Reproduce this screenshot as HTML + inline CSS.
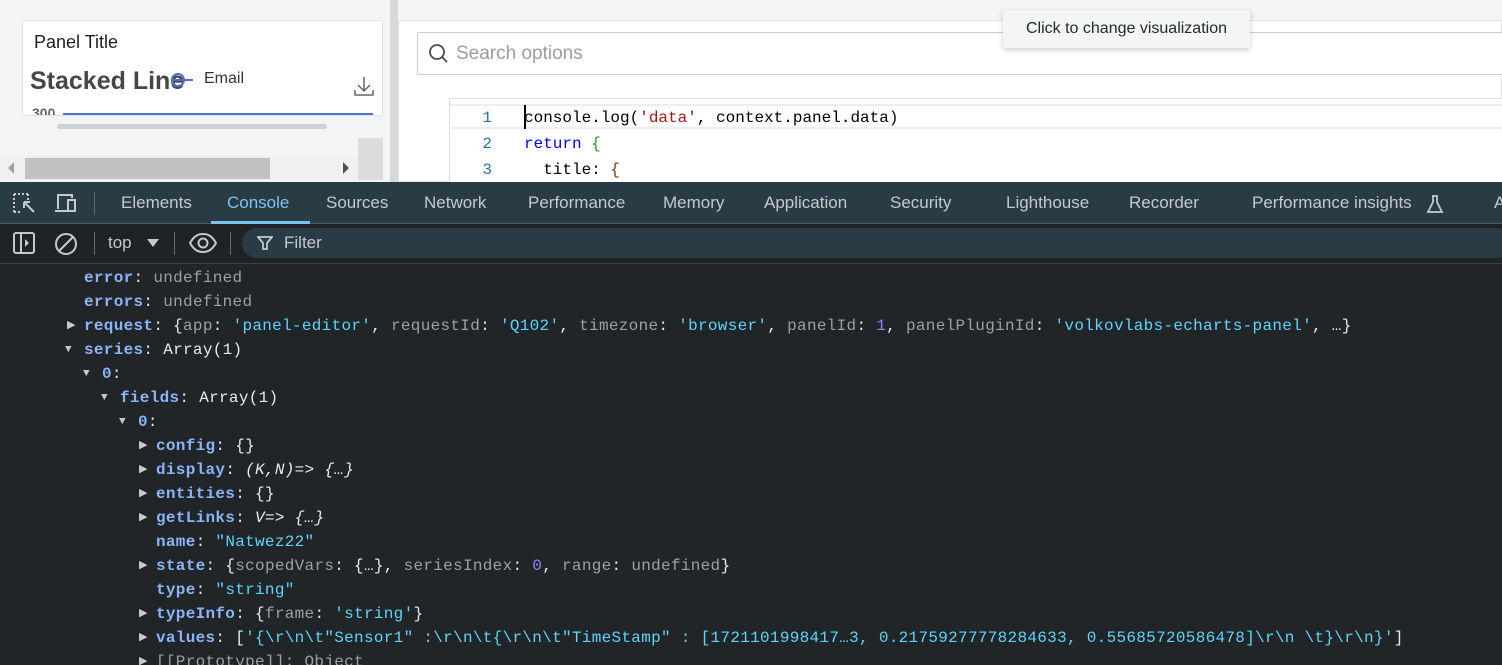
<!DOCTYPE html>
<html><head><meta charset="utf-8"><style>
*{margin:0;padding:0;box-sizing:border-box}
html,body{width:1502px;height:665px;overflow:hidden}
body{background:#212528;font-family:"Liberation Sans",sans-serif;position:relative}
.a{position:absolute}
.mono{font-family:"Liberation Mono",monospace}
.tab{position:absolute;top:193px;font-size:17px;color:#c6c9cc}
.con{position:absolute;left:0;top:266px;width:1502px;font-family:"Liberation Mono",monospace;font-size:16px;letter-spacing:0.3px;color:#e8eaed}
.con div{height:24px;line-height:24px;position:relative;white-space:pre}
.k{color:#8ab4f8;font-weight:bold}
.g{color:#9aa0a6}
.s{color:#5cd5fb}
.n{color:#9980ff}
.tri{position:absolute;font-size:11px;color:#c6c9cc;top:0}
</style></head><body>
<div class="a" style="left:0;top:0;width:1502px;height:182px;background:#f3f4f4"></div>
<div class="a" style="left:390px;top:0;width:8px;height:182px;background:#d7d8d9"></div>
<div class="a" style="left:22px;top:20px;width:361px;height:96px;background:#fff;border:1px solid #e0e2e4;border-radius:3px;overflow:hidden">
 <div class="a" style="left:11px;top:11px;font-size:18px;color:#1f1f20">Panel Title</div>
 <div class="a" style="left:7px;top:46px;font-size:25px;font-weight:bold;color:#464646">Stacked Line</div>
 <div class="a" style="left:148px;top:58px;width:22px;height:2px;background:#5470c6"></div>
 <div class="a" style="left:148px;top:52px;width:14px;height:14px;border:2px solid #5470c6;border-radius:50%"></div>
 <div class="a" style="left:181px;top:49px;font-size:16px;color:#333">Email</div>
 <svg class="a" style="left:330px;top:54px" width="22" height="22" viewBox="0 0 22 22"><path d="M11 2v14M5 10l6 6 6-6M2 15v5h18v-5" fill="none" stroke="#666" stroke-width="1.5"/></svg>
 <div class="a" style="left:9px;top:84px;font-size:14px;font-weight:bold;color:#666">300</div>
 <div class="a" style="left:40px;top:92px;width:310px;height:2px;background:#5470c6"></div>
</div>
<div class="a" style="left:57px;top:124px;width:270px;height:5px;background:#cfd0d0;border-radius:3px"></div>
<div class="a" style="left:0;top:156px;width:358px;height:24px;background:#f0f0f0"></div>
<div class="a" style="left:25px;top:158px;width:245px;height:21px;background:#c1c1c1"></div>
<div class="a" style="left:358px;top:138px;width:25px;height:42px;background:#dcdcdc"></div>
<div class="a" style="left:8px;top:162px;width:0;height:0;border-top:6px solid transparent;border-bottom:6px solid transparent;border-right:6px solid #a3a3a3"></div>
<div class="a" style="left:343px;top:162px;width:0;height:0;border-top:6px solid transparent;border-bottom:6px solid transparent;border-left:6px solid #505050"></div>
<div class="a" style="left:398px;top:20px;width:1104px;height:162px;background:#fff;border:1px solid #e3e4e5"></div>
<div class="a" style="left:417px;top:32px;width:1090px;height:43px;border:1px solid #ccced1;border-radius:2px;background:#fff"></div>
<svg class="a" style="left:428px;top:43px" width="22" height="22" viewBox="0 0 22 22"><circle cx="9" cy="9" r="7" fill="none" stroke="#464c54" stroke-width="1.8"/><path d="M14 14l5 5" stroke="#464c54" stroke-width="1.8"/></svg>
<div class="a" style="left:456px;top:43px;font-size:19px;color:#9a9ea3">Search options</div>
<div class="a" style="left:449px;top:98px;width:1060px;height:90px;border:1px solid #dcdde0;background:#fff"></div>
<div class="a" style="left:450px;top:104px;width:1052px;height:25px;border-top:2px solid #eeeeee;border-bottom:2px solid #eeeeee"></div>
<div class="a" style="left:524px;top:105px;width:2px;height:24px;background:#000"></div>
<div class="a mono" style="left:470px;top:105px;font-size:16px;line-height:26px;color:#237893;text-align:right;width:22px">1<br>2<br>3</div>
<div class="a mono" style="left:524px;top:105px;font-size:16px;line-height:26px;color:#000;white-space:pre">console.log(<span style="color:#a31515">'data'</span>, context.panel.data)
<span style="color:#0000ff">return</span> <span style="color:#319331">{</span>
  title: <span style="color:#7b3814">{</span></div>
<div class="a" style="left:1003px;top:10px;width:247px;height:38px;background:#f4f5f5;box-shadow:0 2px 6px rgba(0,0,0,.2);border-radius:2px;font-size:16px;color:#24292e;line-height:38px;text-align:center">Click to change visualization</div>
<div class="a" style="left:0;top:182px;width:1502px;height:42px;background:#293b45;border-bottom:1px solid #4a5a64"></div>
<svg class="a" style="left:12px;top:192px" width="26" height="24" viewBox="0 0 26 24"><path d="M2 2h14M2 2v18M2 20h6M16 2v6" stroke="#c6c9cc" stroke-width="2" stroke-dasharray="2 2" fill="none"/><path d="M12 10l10 10M12 10h6M12 10v6" stroke="#c6c9cc" stroke-width="2" fill="none"/></svg>
<svg class="a" style="left:53px;top:192px" width="26" height="24" viewBox="0 0 26 24"><path d="M5 17V3h14v3M2 19h12" stroke="#c6c9cc" stroke-width="2" fill="none"/><rect x="15" y="8" width="7" height="11" stroke="#c6c9cc" stroke-width="2" fill="none"/></svg>
<div class="a" style="left:94px;top:192px;width:1px;height:23px;background:#5f6b72"></div>
<div class="tab" style="left:121px">Elements</div>
<div class="tab" style="left:227px;color:#7cc4f0">Console</div>
<div class="a" style="left:211px;top:221px;width:99px;height:3px;background:#7cc4f0"></div>
<div class="tab" style="left:326px">Sources</div>
<div class="tab" style="left:424px">Network</div>
<div class="tab" style="left:528px">Performance</div>
<div class="tab" style="left:663px">Memory</div>
<div class="tab" style="left:764px">Application</div>
<div class="tab" style="left:890px">Security</div>
<div class="tab" style="left:1006px">Lighthouse</div>
<div class="tab" style="left:1129px">Recorder</div>
<div class="tab" style="left:1252px">Performance insights</div>
<svg class="a" style="left:1426px;top:194px" width="18" height="20" viewBox="0 0 18 20"><path d="M6 2h6M7 2v6L2 18h14L11 8V2" stroke="#c6c9cc" stroke-width="1.8" fill="none"/></svg>
<div class="tab" style="left:1494px">A</div>
<div class="a" style="left:0;top:224px;width:1502px;height:40px;background:#1f2326;border-bottom:1px solid #3a4248"></div>
<svg class="a" style="left:13px;top:232px" width="22" height="22" viewBox="0 0 22 22"><rect x="1" y="1" width="20" height="20" rx="2" stroke="#c6c9cc" stroke-width="2" fill="none"/><path d="M8 1v20" stroke="#c6c9cc" stroke-width="2"/><path d="M12 7l4 4-4 4z" fill="#c6c9cc"/></svg>
<svg class="a" style="left:54px;top:232px" width="24" height="24" viewBox="0 0 24 24"><circle cx="12" cy="12" r="10" stroke="#c6c9cc" stroke-width="2" fill="none"/><path d="M5 19L19 5" stroke="#c6c9cc" stroke-width="2"/></svg>
<div class="a" style="left:94px;top:232px;width:1px;height:23px;background:#5f6b72"></div>
<div class="a" style="left:108px;top:233px;font-size:17px;color:#c6c9cc">top</div>
<div class="a" style="left:147px;top:239px;border-left:6px solid transparent;border-right:6px solid transparent;border-top:8px solid #c6c9cc"></div>
<div class="a" style="left:174px;top:232px;width:1px;height:23px;background:#5f6b72"></div>
<svg class="a" style="left:189px;top:232px" width="28" height="22" viewBox="0 0 28 22"><path d="M1 11C5 4 9 2 14 2s9 2 13 9c-4 7-8 9-13 9S5 18 1 11z" stroke="#c6c9cc" stroke-width="2" fill="none"/><circle cx="14" cy="11" r="4.5" stroke="#c6c9cc" stroke-width="2" fill="none"/></svg>
<div class="a" style="left:230px;top:232px;width:1px;height:23px;background:#5f6b72"></div>
<div class="a" style="left:242px;top:228px;width:1270px;height:30px;background:#293b45;border-radius:15px"></div>
<svg class="a" style="left:257px;top:235px" width="16" height="16" viewBox="0 0 16 16"><path d="M1 2h14l-5 6v6H6V8z" stroke="#c6c9cc" stroke-width="1.8" fill="none"/></svg>
<div class="a" style="left:284px;top:233px;font-size:17px;color:#c6c9cc">Filter</div>
<div class="con"><div style="left:84px"><span class="k">error</span>: <span class="g">undefined</span></div><div style="left:84px"><span class="k">errors</span>: <span class="g">undefined</span></div><div style="left:84px"><span class="tri" style="left:-17px">▶</span><span class="k">request</span>: {<span class="g">app</span>: <span class="s">'panel-editor'</span>, <span class="g">requestId</span>: <span class="s">'Q102'</span>, <span class="g">timezone</span>: <span class="s">'browser'</span>, <span class="g">panelId</span>: <span class="n">1</span>, <span class="g">panelPluginId</span>: <span class="s">'volkovlabs-echarts-panel'</span>, …}</div><div style="left:84px"><span class="tri" style="left:-19px">▼</span><span class="k">series</span>: Array(1)</div><div style="left:102px"><span class="tri" style="left:-19px">▼</span><span class="k">0</span>:</div><div style="left:120px"><span class="tri" style="left:-19px">▼</span><span class="k">fields</span>: Array(1)</div><div style="left:138px"><span class="tri" style="left:-19px">▼</span><span class="k">0</span>:</div><div style="left:156px"><span class="tri" style="left:-17px">▶</span><span class="k">config</span>: {}</div><div style="left:156px"><span class="tri" style="left:-17px">▶</span><span class="k">display</span>: <i>(K,N)=&gt; {…}</i></div><div style="left:156px"><span class="tri" style="left:-17px">▶</span><span class="k">entities</span>: {}</div><div style="left:156px"><span class="tri" style="left:-17px">▶</span><span class="k">getLinks</span>: <i>V=&gt; {…}</i></div><div style="left:156px"><span class="k">name</span>: <span class="s">"Natwez22"</span></div><div style="left:156px"><span class="tri" style="left:-17px">▶</span><span class="k">state</span>: {<span class="g">scopedVars</span>: {…}, <span class="g">seriesIndex</span>: <span class="n">0</span>, <span class="g">range</span>: <span class="g">undefined</span>}</div><div style="left:156px"><span class="k">type</span>: <span class="s">"string"</span></div><div style="left:156px"><span class="tri" style="left:-17px">▶</span><span class="k">typeInfo</span>: {<span class="g">frame</span>: <span class="s">'string'</span>}</div><div style="left:156px"><span class="tri" style="left:-17px">▶</span><span class="k">values</span>: [<span class="s">'{\r\n\t"Sensor1" :\r\n\t{\r\n\t"TimeStamp" : [1721101998417…3, 0.21759277778284633, 0.55685720586478]\r\n \t}\r\n}'</span>]</div><div style="left:156px;color:#9aa0a6"><span class="tri" style="left:-17px">▶</span>[[Prototype]]: Object</div></div>
</body></html>
